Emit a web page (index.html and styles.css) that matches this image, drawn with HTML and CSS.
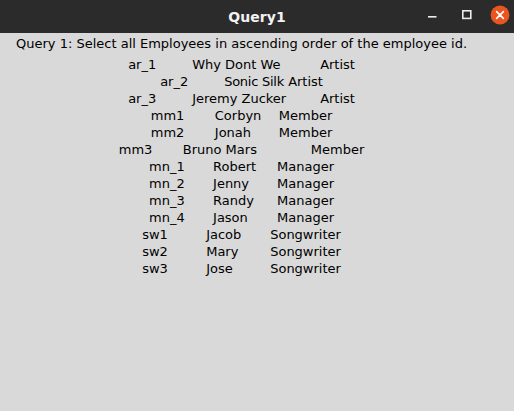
FILE: index.html
```html
<!DOCTYPE html>
<html>
<head>
<meta charset="utf-8">
<link rel="stylesheet" href="styles.css">
</head>
<body>
<div class="window">
  <div class="titlebar">
    <div class="title">Query1</div>
    <div class="controls">
      <svg class="btn-min" width="14" height="14" viewBox="0 0 14 14"><rect x="2" y="8" width="8.5" height="1.6" fill="#ececec"/></svg>
      <svg class="btn-max" width="14" height="14" viewBox="0 0 14 14"><rect x="2.8" y="2.8" width="8" height="7.6" fill="none" stroke="#ececec" stroke-width="1.6"/></svg>
      <svg class="close" width="20" height="20" viewBox="0 0 20 20"><circle cx="10" cy="10" r="9.4" fill="#e95420"/><path d="M6.6 6.6 L13.4 13.4 M13.4 6.6 L6.6 13.4" stroke="#fff" stroke-width="1.6" stroke-linecap="round"/></svg>
    </div>
  </div>
  <div class="content">
    <div class="column">
      <div class="heading">Query 1: Select all Employees in ascending order of the employee id.</div>
      <div class="rows">
        <div class="row">ar_1	Why Dont We	Artist</div>
        <div class="row">ar_2	<span class="tight">Sonic Silk</span>	Artist</div>
        <div class="row">ar_3	Jeremy Zucker	Artist</div>
        <div class="row">mm1	Corbyn	Member</div>
        <div class="row">mm2	Jonah	Member</div>
        <div class="row">mm3	Bruno Mars	Member</div>
        <div class="row">mn_1	Robert	Manager</div>
        <div class="row">mn_2	Jenny	Manager</div>
        <div class="row">mn_3	Randy	Manager</div>
        <div class="row">mn_4	Jason	Manager</div>
        <div class="row">sw1	Jacob	Songwriter</div>
        <div class="row">sw2	Mary	Songwriter</div>
        <div class="row">sw3	Jose	Songwriter</div>
      </div>
    </div>
  </div>
</div>
</body>
</html>
```
FILE: styles.css
```css
html, body {
  margin: 0;
  padding: 0;
  background: #d9d9d9;
}
.window {
  width: 514px;
  height: 411px;
  display: flex;
  flex-direction: column;
  background: #d9d9d9;
}
.titlebar {
  height: 33px;
  background: #2c2b2b;
  position: relative;
  display: flex;
  align-items: center;
  justify-content: center;
  flex-shrink: 0;
}
.title {
  color: #f2f2f2;
  font-family: "DejaVu Sans", sans-serif;
  font-weight: bold;
  font-size: 14px;
  letter-spacing: 0.1px;
}
.controls {
  position: absolute;
  right: 4px;
  top: 5px;
  display: flex;
  align-items: center;
}
.btn-min {
  margin-right: 20px;
}
.btn-max {
  margin-right: 16px;
}
.content {
  padding: 2px 0 0 16px;
  font-family: "DejaVu Sans", sans-serif;
  font-size: 13px;
  line-height: 17px;
  color: #000;
}
.column {
  display: inline-flex;
  flex-direction: column;
  align-items: center;
}
.heading {
  margin-bottom: 4px;
}
.rows {
  display: flex;
  flex-direction: column;
  align-items: center;
}
.row {
  white-space: pre;
  tab-size: 64px;
}
.tight {
  letter-spacing: -0.25px;
}
```
